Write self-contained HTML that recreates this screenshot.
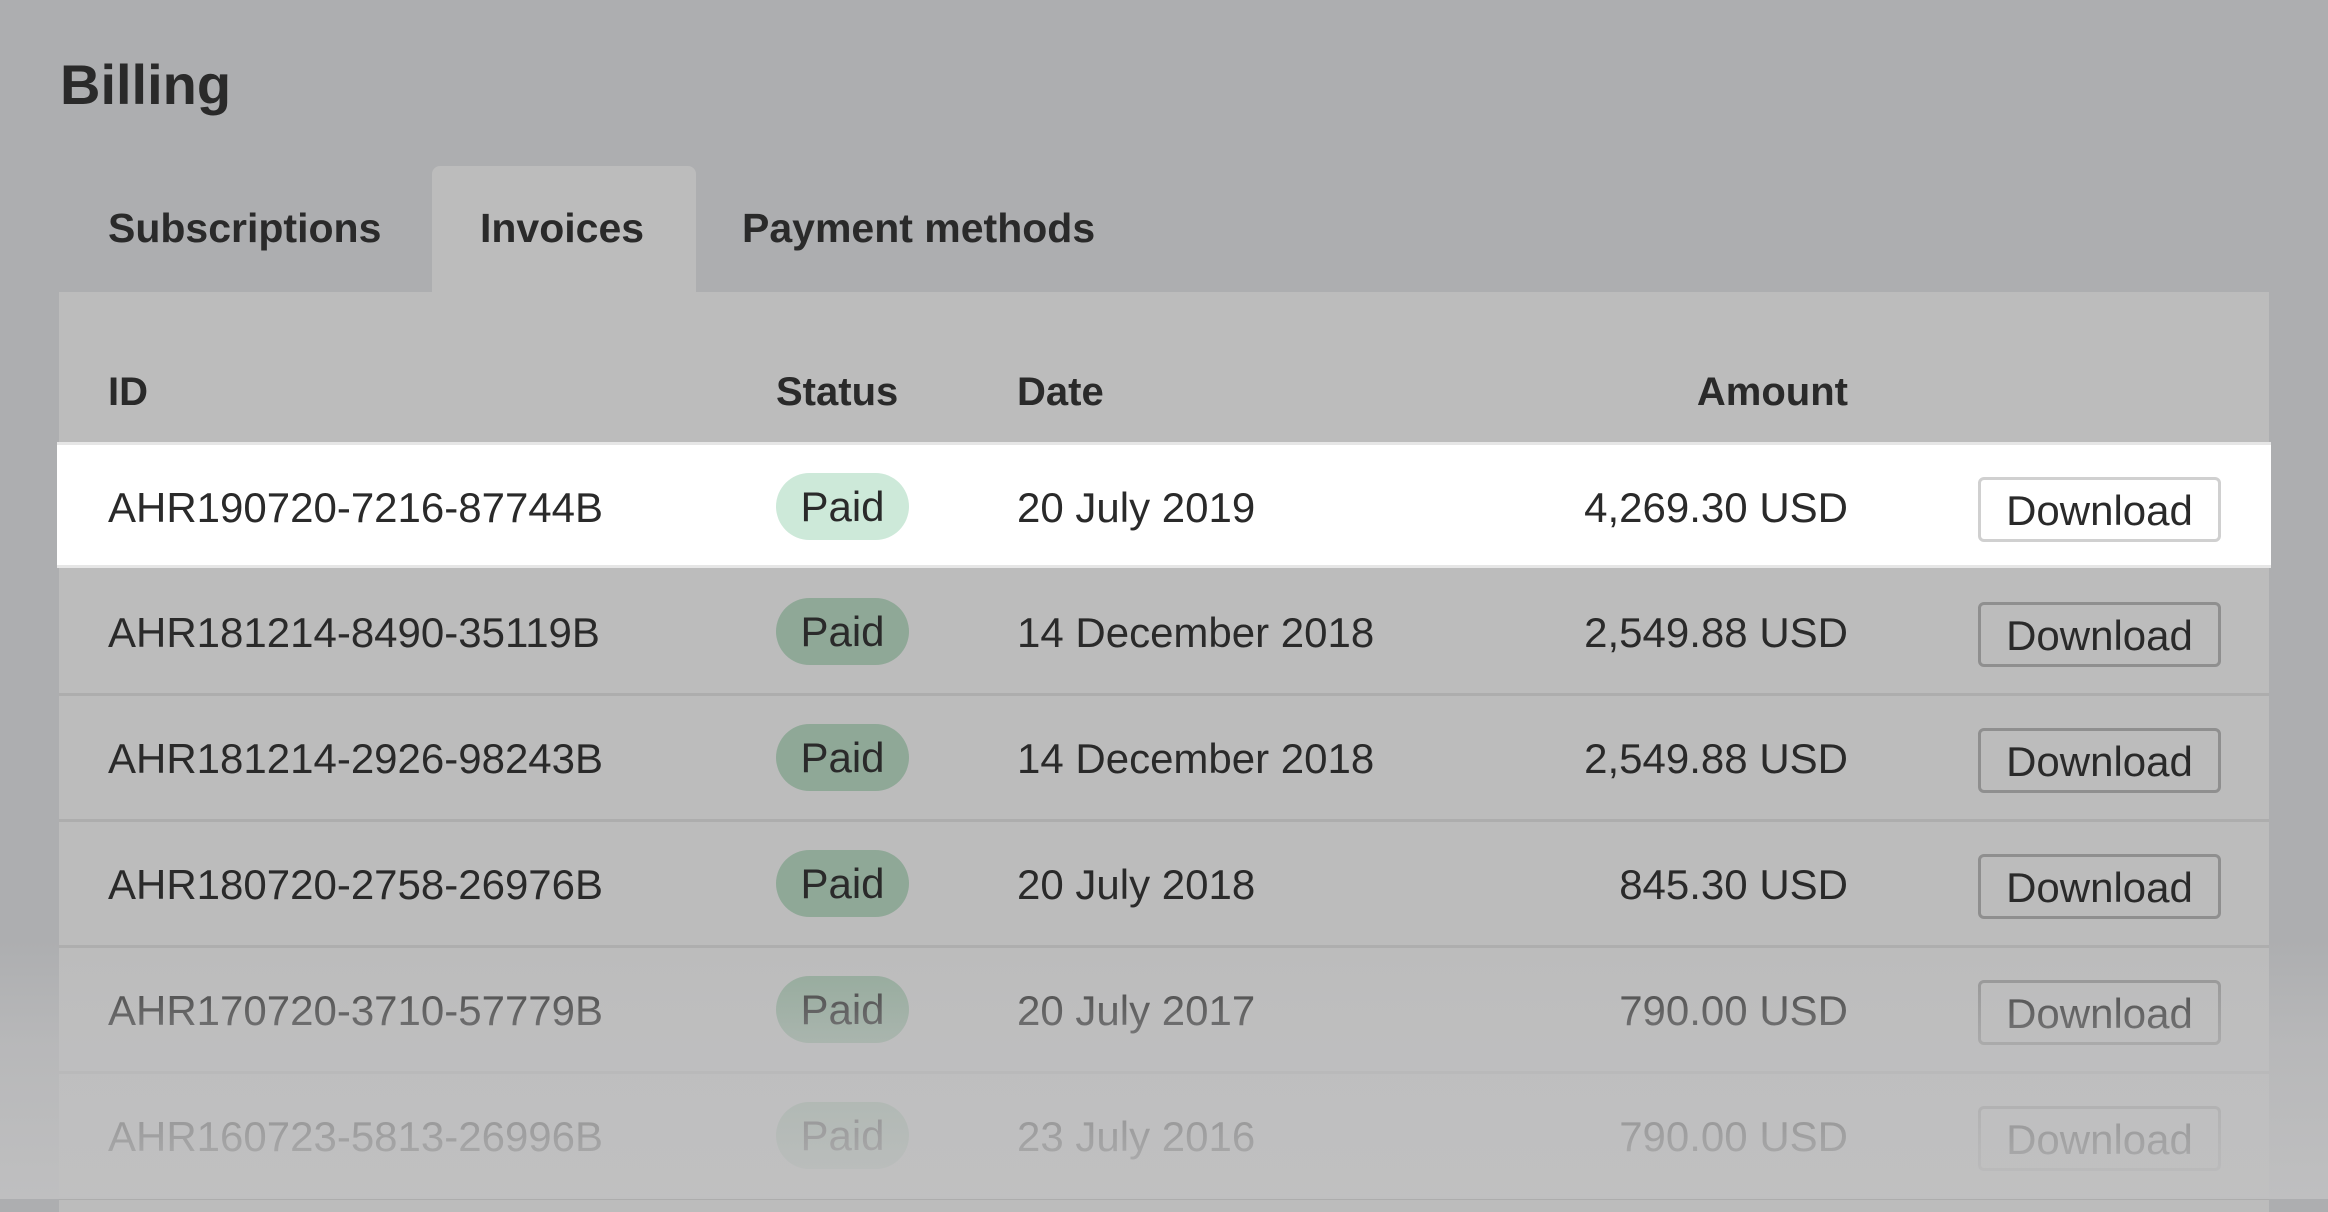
<!DOCTYPE html>
<html><head><style>
*{margin:0;padding:0;box-sizing:border-box}
body{width:2328px;height:1199px;overflow:hidden;background:#adaeb0;font-family:"Liberation Sans",Arial,sans-serif;color:#2a2a2a;position:relative}
h1{position:absolute;left:60px;top:52px;font-size:56px;font-weight:bold}
.tab{position:absolute;top:205px;font-size:41px;font-weight:bold}
.tabbox{position:absolute;left:432px;top:166px;width:264px;height:130px;background:#bcbcbc;border-radius:8px 8px 0 0}
.panel{position:absolute;left:59px;top:292px;width:2210px;height:920px;background:#bcbcbc}
.th{position:absolute;top:370px;font-size:40px;font-weight:bold}
.row{position:absolute;left:59px;width:2210px;height:126px;border-bottom:3px solid #adadad}
.row.w{background:#fff;border-bottom:3px solid #e6e6e6;border-top:3px solid #e6e6e6;left:57px;width:2214px}
.c{position:absolute;top:38px;font-size:42px;line-height:50px}
.pill{position:absolute;left:717px;top:28px;width:133px;height:67px;border-radius:34px;background:#8fa897;font-size:42px;line-height:67px;text-align:center}
.w .pill{background:#cde9d9;left:719px}
.btn{position:absolute;left:1919px;top:32px;width:243px;height:65px;border:3px solid #8f8f8f;border-radius:6px;font-size:42px;line-height:62px;text-align:center}
.w .btn{border-color:#d0d0d0;left:1921px}
.amt{right:421px;text-align:right}
.fade{position:absolute;left:0;top:940px;width:2328px;height:259px;background:linear-gradient(rgba(192,192,193,0),rgba(192,192,193,0.55) 40%,rgba(192,192,193,0.95))}
</style></head><body>
<h1>Billing</h1>
<div class="tabbox"></div>
<div class="tab" style="left:108px">Subscriptions</div>
<div class="tab" style="left:480px">Invoices</div>
<div class="tab" style="left:742px">Payment methods</div>
<div class="panel"></div>
<div class="th" style="left:108px">ID</div>
<div class="th" style="left:776px">Status</div>
<div class="th" style="left:1017px">Date</div>
<div class="th" style="right:480px">Amount</div>

<div class="row w" style="top:442px"><div class="c" style="left:51px">AHR190720-7216-87744B</div><div class="pill">Paid</div><div class="c" style="left:960px">20 July 2019</div><div class="c amt" style="right:423px">4,269.30 USD</div><div class="btn">Download</div></div>
<div class="row" style="top:570px"><div class="c" style="left:49px">AHR181214-8490-35119B</div><div class="pill">Paid</div><div class="c" style="left:958px">14 December 2018</div><div class="c amt">2,549.88 USD</div><div class="btn">Download</div></div>
<div class="row" style="top:696px"><div class="c" style="left:49px">AHR181214-2926-98243B</div><div class="pill">Paid</div><div class="c" style="left:958px">14 December 2018</div><div class="c amt">2,549.88 USD</div><div class="btn">Download</div></div>
<div class="row" style="top:822px"><div class="c" style="left:49px">AHR180720-2758-26976B</div><div class="pill">Paid</div><div class="c" style="left:958px">20 July 2018</div><div class="c amt">845.30 USD</div><div class="btn">Download</div></div>
<div class="row" style="top:948px"><div class="c" style="left:49px">AHR170720-3710-57779B</div><div class="pill">Paid</div><div class="c" style="left:958px">20 July 2017</div><div class="c amt">790.00 USD</div><div class="btn">Download</div></div>
<div class="row" style="top:1074px"><div class="c" style="left:49px">AHR160723-5813-26996B</div><div class="pill">Paid</div><div class="c" style="left:958px">23 July 2016</div><div class="c amt">790.00 USD</div><div class="btn">Download</div></div>
<div class="fade"></div>
</body></html>
